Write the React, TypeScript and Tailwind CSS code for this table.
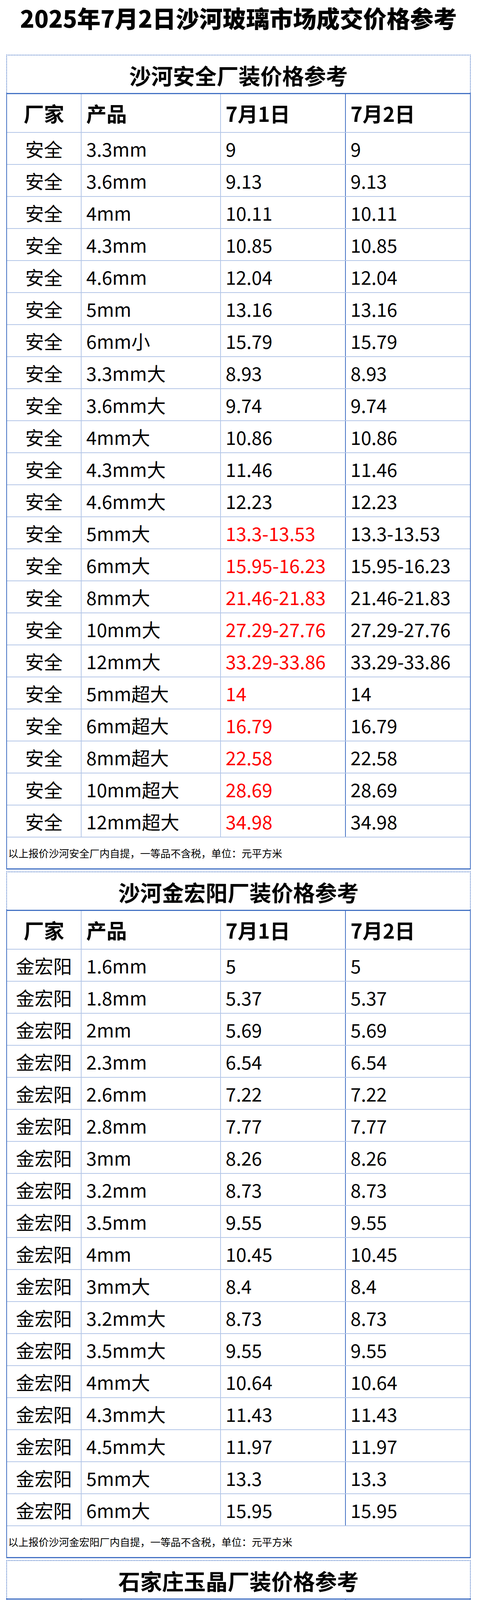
type Row = { name: string; spec: string; d1: string; d2: string; red?: boolean };

const safeRows: Row[] = [
  { name: '安全', spec: '3.3mm', d1: '9', d2: '9' },
  { name: '安全', spec: '3.6mm', d1: '9.13', d2: '9.13' },
  { name: '安全', spec: '4mm', d1: '10.11', d2: '10.11' },
  { name: '安全', spec: '4.3mm', d1: '10.85', d2: '10.85' },
  { name: '安全', spec: '4.6mm', d1: '12.04', d2: '12.04' },
  { name: '安全', spec: '5mm', d1: '13.16', d2: '13.16' },
  { name: '安全', spec: '6mm小', d1: '15.79', d2: '15.79' },
  { name: '安全', spec: '3.3mm大', d1: '8.93', d2: '8.93' },
  { name: '安全', spec: '3.6mm大', d1: '9.74', d2: '9.74' },
  { name: '安全', spec: '4mm大', d1: '10.86', d2: '10.86' },
  { name: '安全', spec: '4.3mm大', d1: '11.46', d2: '11.46' },
  { name: '安全', spec: '4.6mm大', d1: '12.23', d2: '12.23' },
  { name: '安全', spec: '5mm大', d1: '13.3-13.53', d2: '13.3-13.53', red: true },
  { name: '安全', spec: '6mm大', d1: '15.95-16.23', d2: '15.95-16.23', red: true },
  { name: '安全', spec: '8mm大', d1: '21.46-21.83', d2: '21.46-21.83', red: true },
  { name: '安全', spec: '10mm大', d1: '27.29-27.76', d2: '27.29-27.76', red: true },
  { name: '安全', spec: '12mm大', d1: '33.29-33.86', d2: '33.29-33.86', red: true },
  { name: '安全', spec: '5mm超大', d1: '14', d2: '14', red: true },
  { name: '安全', spec: '6mm超大', d1: '16.79', d2: '16.79', red: true },
  { name: '安全', spec: '8mm超大', d1: '22.58', d2: '22.58', red: true },
  { name: '安全', spec: '10mm超大', d1: '28.69', d2: '28.69', red: true },
  { name: '安全', spec: '12mm超大', d1: '34.98', d2: '34.98', red: true },
];

const jhyRows: Row[] = [
  ['1.6mm', '5'],
  ['1.8mm', '5.37'],
  ['2mm', '5.69'],
  ['2.3mm', '6.54'],
  ['2.6mm', '7.22'],
  ['2.8mm', '7.77'],
  ['3mm', '8.26'],
  ['3.2mm', '8.73'],
  ['3.5mm', '9.55'],
  ['4mm', '10.45'],
  ['3mm大', '8.4'],
  ['3.2mm大', '8.73'],
  ['3.5mm大', '9.55'],
  ['4mm大', '10.64'],
  ['4.3mm大', '11.43'],
  ['4.5mm大', '11.97'],
  ['5mm大', '13.3'],
  ['6mm大', '15.95'],
].map(([spec, p]) => ({ name: '金宏阳', spec, d1: p, d2: p }));

const yjRows: Row[] = [
  ['4mm大', '10.39'],
  ['4.3mm大', '11.16'],
  ['5mm大', '13'],
  ['6mm大', '15.59'],
  ['7.2mm大', '18.7'],
  ['7.5mm大', '19.48'],
  ['8mm大', '20.97'],
  ['10mm大', '25.46'],
  ['12mm大', '32.33'],
].map(([spec, p]) => ({ name: '玉晶', spec, d1: p, d2: p }));

const grid = 'grid grid-cols-[191px_357px_320px_1fr]';

function PriceTable({ title, rows, note }: { title: string; rows: Row[]; note: string }) {
  return (
    <section className="mx-4">
      <div className="h-[98px] pt-[4px] border-t-2 border-x-2 border-dotted border-[#4472c4] flex items-center justify-center">
        <h2 className="text-[56px] leading-none font-bold text-black">{title}</h2>
      </div>
      <div className="border-x-2 border-t-[3px] border-b-[3px] border-[#4472c4]">
        <div className={`${grid} h-[99px] border-b-2 border-[#b4c6e7] text-[52px] font-bold leading-none`}>
          <div className="flex items-center justify-center border-r-2 border-[#b4c6e7]">厂家</div>
          <div className="flex items-center pl-3 border-r-2 border-[#b4c6e7]">产品</div>
          <div className="flex items-center pl-3 border-r-2 border-[#4472c4]">7月1日</div>
          <div className="flex items-center pl-3">7月2日</div>
        </div>
        {rows.map((r, i) => (
          <div key={i} className={`${grid} h-[82px] border-b-2 border-[#b4c6e7] text-[48px] leading-none`}>
            <div className="flex items-center justify-center border-r-2 border-[#b4c6e7]">{r.name}</div>
            <div className="flex items-center pl-3 border-r-2 border-[#b4c6e7]">{r.spec}</div>
            <div className={`flex items-center pl-3 border-r-2 border-[#4472c4] ${r.red ? 'text-[#ff0000]' : ''}`}>{r.d1}</div>
            <div className="flex items-center pl-3">{r.d2}</div>
          </div>
        ))}
        <div className="h-[79px] flex items-center pl-[3px] text-[26px] leading-none">{note}</div>
      </div>
    </section>
  );
}

export default function App() {
  return (
    <main className="w-full bg-white text-black font-['Noto_Sans_CJK_SC','Noto_Sans',sans-serif]">
      <div className="h-[140px] pt-[15px] text-center">
        <h1 className="text-[60px] leading-none font-black">2025年7月2日沙河玻璃市场成交价格参考</h1>
      </div>
      <div className="flex flex-col gap-[5px]">
        <PriceTable title="沙河安全厂装价格参考" rows={safeRows} note="以上报价沙河安全厂内自提，一等品不含税，单位：元平方米" />
        <PriceTable title="沙河金宏阳厂装价格参考" rows={jhyRows} note="以上报价沙河金宏阳厂内自提，一等品不含税，单位：元平方米" />
        <PriceTable title="石家庄玉晶厂装价格参考" rows={yjRows} note="以上报价石家庄玉晶厂内自提，一等品不含税，单位：元平方米" />
      </div>
    </main>
  );
}
